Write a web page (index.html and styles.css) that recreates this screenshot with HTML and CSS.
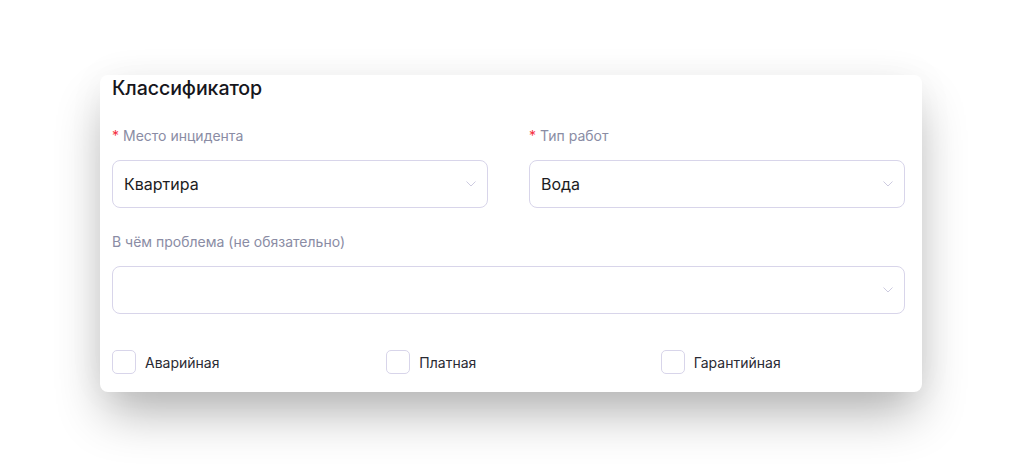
FILE: index.html
```html
<!DOCTYPE html>
<html lang="ru">
<head>
<meta charset="utf-8">
<link rel="stylesheet" href="styles.css">
</head>
<body>
<div class="page">
  <section class="card">
    <h2 class="title">Классификатор</h2>
    <div class="row two">
      <div class="field">
        <label class="label"><span class="req">*</span>Место инцидента</label>
        <div class="select">
          <span class="value">Квартира</span>
          <svg class="chev" width="10" height="6" viewBox="0 0 10 6"><path d="M0.5 0.5 L5 5 L9.5 0.5" fill="none" stroke="#cdcbe0" stroke-width="1"/></svg>
        </div>
      </div>
      <div class="field">
        <label class="label"><span class="req">*</span>Тип работ</label>
        <div class="select">
          <span class="value">Вода</span>
          <svg class="chev" width="10" height="6" viewBox="0 0 10 6"><path d="M0.5 0.5 L5 5 L9.5 0.5" fill="none" stroke="#cdcbe0" stroke-width="1"/></svg>
        </div>
      </div>
    </div>
    <div class="field wide">
      <label class="label">В чём проблема (не обязательно)</label>
      <div class="select">
        <span class="value"></span>
        <svg class="chev" width="10" height="6" viewBox="0 0 10 6"><path d="M0.5 0.5 L5 5 L9.5 0.5" fill="none" stroke="#cdcbe0" stroke-width="1"/></svg>
      </div>
    </div>
    <div class="checks">
      <label class="check"><span class="box"></span>Аварийная</label>
      <label class="check"><span class="box"></span>Платная</label>
      <label class="check"><span class="box"></span>Гарантийная</label>
    </div>
  </section>
</div>
</body>
</html>
```

FILE: styles.css
```css
* { box-sizing: border-box; }
html, body { margin: 0; padding: 0; background: #ffffff; }
body { font-family: "Inter", "Noto Sans", sans-serif; color: #1c1c22; }
.page { padding: 75px 100px 76px 100px; }
.card {
  width: 822px;
  background: #fff;
  border-radius: 8px;
  box-shadow: 0 26px 50px -6px rgba(0, 0, 0, 0.3), 0 0 40px rgba(0, 0, 0, 0.04);
  padding: 1px 17px 18px 12px;
}
.title {
  margin: 0;
  font-size: 19.6px;
  line-height: 24px;
  font-weight: 500;
  color: #16161c;
  letter-spacing: -0.1px;
}
.row.two {
  display: grid;
  grid-template-columns: 1fr 1fr;
  column-gap: 41px;
  margin-top: 26px;
}
.field { display: flex; flex-direction: column; }
.label {
  font-size: 14px;
  line-height: 20px;
  color: #8a8ca4;
  margin-bottom: 14px;
}
.req { color: #f5313f; margin-right: 4px; }
.select {
  height: 48px;
  border: 1px solid #d8d5ea;
  border-radius: 8px;
  display: flex;
  align-items: center;
  justify-content: space-between;
  padding: 0 11px 0 11px;
}
.value { font-size: 16px; color: #1c1c22; }
.wide { margin-top: 24px; }
.checks {
  display: grid;
  grid-template-columns: repeat(3, 1fr);
  column-gap: 30px;
  margin-top: 36px;
}
.check {
  display: flex;
  align-items: center;
  font-size: 14px;
  color: #2a2a33;
}
.box {
  width: 24px;
  height: 24px;
  border: 1px solid #d8d5ea;
  border-radius: 5px;
  margin-right: 9px;
  flex: none;
}
```
